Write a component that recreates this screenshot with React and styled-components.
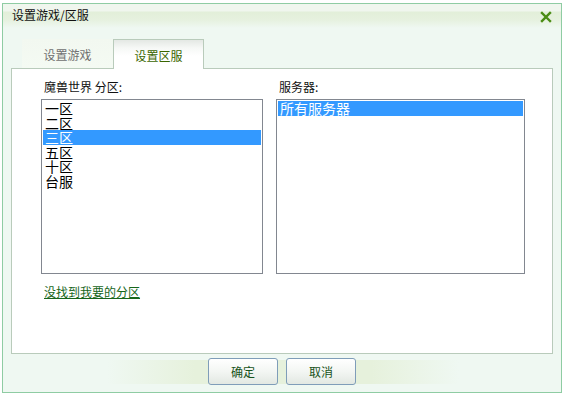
import React from "react";
import styled, { createGlobalStyle } from "styled-components";

const Global = createGlobalStyle`
  html, body { margin: 0; padding: 0; background: #ffffff; }
  body { font-family: "Noto Sans CJK SC", "Liberation Sans", sans-serif; }
  * { box-sizing: border-box; }
`;

const Page = styled.div`
  width: 566px;
  height: 396px;
  padding: 3px 0 0 2px;
`;

const Dialog = styled.div`
  width: 560px;
  height: 390px;
  border: 1px solid #8fcca3;
  background: #eff8f2;
  display: flex;
  flex-direction: column;
`;

const TitleBar = styled.div`
  height: 35px;
  display: flex;
  align-items: flex-start;
  justify-content: space-between;
  padding: 3px 9px 0 9px;
  background: linear-gradient(
    to bottom,
    #f0f6ee 0px,
    #f0f6ee 7px,
    #e2efd9 8px,
    #e6f1df 16px,
    #eff8f2 24px,
    #eff8f2 100%
  );
`;

const Title = styled.div`
  font-size: 12px;
  line-height: 16px;
  color: #111;
`;

const CloseBtn = styled.div`
  width: 12px;
  height: 12px;
  margin-top: 4px;
  display: flex;
`;

const TabRow = styled.div`
  height: 29px;
  display: flex;
  align-items: flex-end;
  padding-left: 19px;
  position: relative;
  z-index: 1;
`;

const Tab = styled.div`
  width: 91px;
  height: ${(p) => (p.$active ? "30px" : "29px")};
  margin-bottom: ${(p) => (p.$active ? "-1px" : "0")};
  display: flex;
  align-items: center;
  justify-content: center;
  font-size: 12px;
  padding-top: 2px;
  color: ${(p) => (p.$active ? "#3a6600" : "#707070")};
  border: ${(p) => (p.$active ? "1px solid #b9cbbb" : "none")};
  border-bottom: none;
  background: ${(p) =>
    p.$active
      ? "linear-gradient(to bottom, #e4e8e4 0px, #f6f8f6 8px, #ffffff 16px)"
      : "linear-gradient(to bottom, #f2f8f0 0px, #f4faf3 100%)"};
`;

const Panel = styled.div`
  margin: 0 8px;
  height: 286px;
  background: #ffffff;
  border: 1px solid #b9cbbb;
  display: grid;
  grid-template-columns: 222px 249px;
  column-gap: 13px;
  padding: 10px 0 0 29px;
  align-content: start;
`;

const Column = styled.div`
  display: flex;
  flex-direction: column;
`;

const Label = styled.div`
  font-size: 12px;
  line-height: 16px;
  height: 20px;
  padding-left: 3px;
  color: #111;
  white-space: pre;
`;

const ListBox = styled.div`
  height: 175px;
  border: 1px solid #828790;
  background: #fff;
  padding: 1px 1px;
  display: flex;
  flex-direction: column;
`;

const Item = styled.div`
  height: ${(p) => p.$h || 14.5}px;
  line-height: ${(p) => p.$h || 14.5}px;
  font-size: 14px;
  padding-left: 2px;
  color: ${(p) => (p.$selected ? "#ffffff" : "#000000")};
  background: ${(p) => (p.$selected ? "#3399ff" : "transparent")};
  white-space: nowrap;
`;

const LinkText = styled.a`
  grid-column: 1 / span 2;
  margin-top: 10px;
  padding-left: 3px;
  font-size: 12px;
  line-height: 16px;
  color: #17661a;
  text-decoration: underline;
  cursor: pointer;
`;

const Footer = styled.div`
  flex: 1;
  display: flex;
  align-items: flex-start;
  justify-content: center;
  gap: 8px;
  padding: 4px 0 0 0;
  position: relative;
`;

const FooterBand = styled.div`
  position: absolute;
  left: 104px;
  width: 352px;
  top: 6px;
  height: 24px;
  background: linear-gradient(
    to right,
    rgba(228, 240, 218, 0) 0%,
    #e6f1dc 25%,
    #e6f1dc 75%,
    rgba(228, 240, 218, 0) 100%
  );
`;

const Button = styled.button`
  position: relative;
  width: 70px;
  height: 27px;
  border: 1px solid #7f9db9;
  border-radius: 3px;
  background: linear-gradient(to bottom, #ffffff 0%, #f3f6f3 50%, #e2e8e2 100%);
  color: #17521a;
  font-family: "Noto Sans CJK SC", "Liberation Sans", sans-serif;
  font-size: 12px;
  padding: 0;
  cursor: pointer;
`;

export default function App() {
  const zones = ["一区", "二区", "三区", "五区", "十区", "台服"];
  return (
    <Page>
      <Global />
      <Dialog>
        <TitleBar>
          <Title>设置游戏/区服</Title>
          <CloseBtn>
            <svg width="12" height="12" viewBox="0 0 12 12">
              <path d="M2 2 L10 10 M10 2 L2 10" stroke="#4a8c14" strokeWidth="2.4" strokeLinecap="square" />
            </svg>
          </CloseBtn>
        </TitleBar>
        <TabRow>
          <Tab>设置游戏</Tab>
          <Tab $active>设置区服</Tab>
        </TabRow>
        <Panel>
          <Column>
            <Label>魔兽世界 分区:</Label>
            <ListBox>
              {zones.map((z, i) => (
                <Item key={z} $selected={i === 2}>
                  {z}
                </Item>
              ))}
            </ListBox>
          </Column>
          <Column>
            <Label>服务器:</Label>
            <ListBox>
              <Item $selected $h={15}>
                所有服务器
              </Item>
            </ListBox>
          </Column>
          <LinkText>没找到我要的分区</LinkText>
        </Panel>
        <Footer>
          <FooterBand />
          <Button>确定</Button>
          <Button>取消</Button>
        </Footer>
      </Dialog>
    </Page>
  );
}
